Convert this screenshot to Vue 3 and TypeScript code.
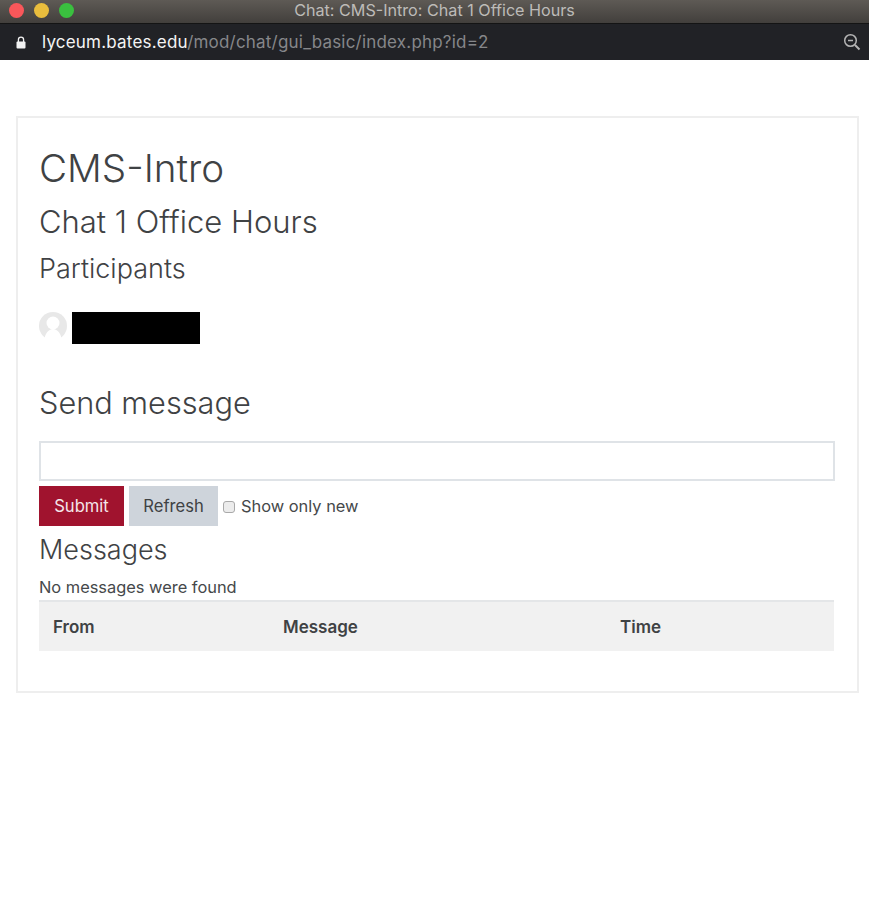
<script setup lang="ts">
const columns = [
  { label: 'From', width: '230px' },
  { label: 'Message', width: '337px' },
  { label: 'Time', width: 'auto' },
]
</script>

<template>
  <div class="page">
    <div class="titlebar">
      <div class="lights">
        <span class="light red"></span>
        <span class="light yellow"></span>
        <span class="light green"></span>
      </div>
      <span class="wintitle">Chat: CMS-Intro: Chat 1 Office Hours</span>
    </div>
    <div class="urlbar">
      <svg class="lock" width="10" height="13" viewBox="0 0 10 13">
        <path d="M2.4 6V3.8a2.6 2.6 0 0 1 5.2 0V6" fill="none" stroke="#f2f2f2" stroke-width="1.3" />
        <rect x="0.5" y="5.5" width="9" height="7" rx="1" fill="#f2f2f2" />
      </svg>
      <span class="url"><span class="host">lyceum.bates.edu</span>/mod/chat/gui_basic/index.php?id=2</span>
      <svg class="zoom" width="18" height="18" viewBox="0 0 18 18">
        <circle cx="7.5" cy="7.5" r="5.8" fill="none" stroke="#b4b4b4" stroke-width="1.5" />
        <path d="M5 7.5h5" stroke="#b4b4b4" stroke-width="1.5" />
        <path d="M12 12l4.5 4.5" stroke="#b4b4b4" stroke-width="2" />
      </svg>
    </div>

    <div class="card">
      <h1>CMS-Intro</h1>
      <h2>Chat 1 Office Hours</h2>
      <h3>Participants</h3>
      <div class="participant">
        <svg class="avatar" width="28" height="28" viewBox="0 0 28 28">
          <circle cx="14" cy="14" r="14" fill="#e8e8e8" />
          <circle cx="14" cy="11" r="6.5" fill="#fff" />
          <path d="M5.5 28c0-6 4-11 8.5-11s8.5 5 8.5 11z" fill="#fff" />
        </svg>
        <div class="redacted"></div>
      </div>

      <h2 class="send">Send message</h2>
      <input class="msg" type="text" />
      <div class="actions">
        <button class="btn submit">Submit</button>
        <button class="btn refresh">Refresh</button>
        <label class="check"><input type="checkbox" />Show only new</label>
      </div>

      <h3 class="messages">Messages</h3>
      <p class="none">No messages were found</p>
      <div class="thead">
        <div v-for="c in columns" :key="c.label" class="th" :style="{ width: c.width }">{{ c.label }}</div>
      </div>
    </div>
  </div>
</template>

<style scoped>
.page {
  width: 869px;
  height: 900px;
  overflow: hidden;
  background: #fff;
  font-family: Inter, "Liberation Sans", sans-serif;
  color: #3f4244;
}

.titlebar {
  height: 23px;
  box-sizing: content-box;
  display: flex;
  align-items: flex-start;
  justify-content: center;
  position: relative;
  background: linear-gradient(#5e5a55, #423f3c);
  border-bottom: 1px solid #141414;
}

.lights {
  position: absolute;
  left: 9px;
  top: 3px;
  display: flex;
  gap: 10px;
}

.light {
  width: 15px;
  height: 15px;
  border-radius: 50%;
}

.red { background: #f9575a; }
.yellow { background: #e9bd3d; }
.green { background: #3ac03f; }

.wintitle {
  font-size: 16.15px;
  line-height: 21px;
  color: #bdbbb8;
}

.urlbar {
  height: 36px;
  background: #212226;
  display: flex;
  align-items: center;
  padding: 0 8px 0 16px;
}

.lock {
  margin-right: 16px;
}

.url {
  flex: 1;
  font-size: 17px;
  letter-spacing: 0.2px;
  color: #86878a;
}

.host {
  color: #f4f4f4;
}

.card {
  margin: 56px 10px 0 16px;
  height: 577px;
  box-sizing: border-box;
  border: 2px solid #eeeeee;
  padding: 26px 22px 0 21px;
}

h1, h2, h3 {
  margin: 0;
  font-weight: 300;
}

h1 {
  font-size: 38.6px;
  line-height: 48px;
}

h2 {
  font-size: 31px;
  line-height: 38px;
  margin-top: 11px;
}

h3 {
  font-size: 27px;
  line-height: 34px;
  margin-top: 11px;
}

.participant {
  display: flex;
  align-items: flex-start;
  gap: 5px;
  margin-top: 26px;
}

.avatar {
  flex: none;
}

.redacted {
  width: 128px;
  height: 32px;
  background: #000;
}

h2.send {
  font-size: 30.7px;
  margin-top: 40px;
}

.msg {
  display: block;
  width: 100%;
  height: 40px;
  margin-top: 19px;
  box-sizing: border-box;
  border: 2px solid #dfe3e7;
  background: #fff;
  outline: none;
}

.actions {
  display: flex;
  align-items: center;
  gap: 5px;
  margin-top: 5px;
}

.btn {
  height: 40px;
  border: none;
  font-family: inherit;
  font-size: 16.6px;
  padding: 0;
}

.submit {
  width: 85px;
  background: #a0132e;
  color: #f4e6e9;
}

.refresh {
  width: 89px;
  background: #ced4db;
  color: #3f4244;
}

.check {
  display: flex;
  align-items: center;
  gap: 6px;
  font-size: 16.4px;
  color: #45484a;
}

.check input {
  appearance: none;
  margin: 1px 0 0;
  width: 12px;
  height: 12px;
  box-sizing: border-box;
  border: 1px solid #a9a9a9;
  border-radius: 3px;
  background: #ececec;
}

h3.messages {
  margin-top: 7px;
}

.none {
  margin: 10px 0 0;
  font-size: 16.4px;
  line-height: 20px;
  color: #45484a;
}

.thead {
  width: 795px;
  height: 51px;
  margin-top: 3px;
  box-sizing: border-box;
  display: flex;
  align-items: center;
  padding-left: 14px;
  background: #f1f1f1;
  border-top: 2px solid #e4e6e8;
}

.th {
  font-size: 17px;
  font-weight: 600;
  color: #3f4244;
}
</style>
